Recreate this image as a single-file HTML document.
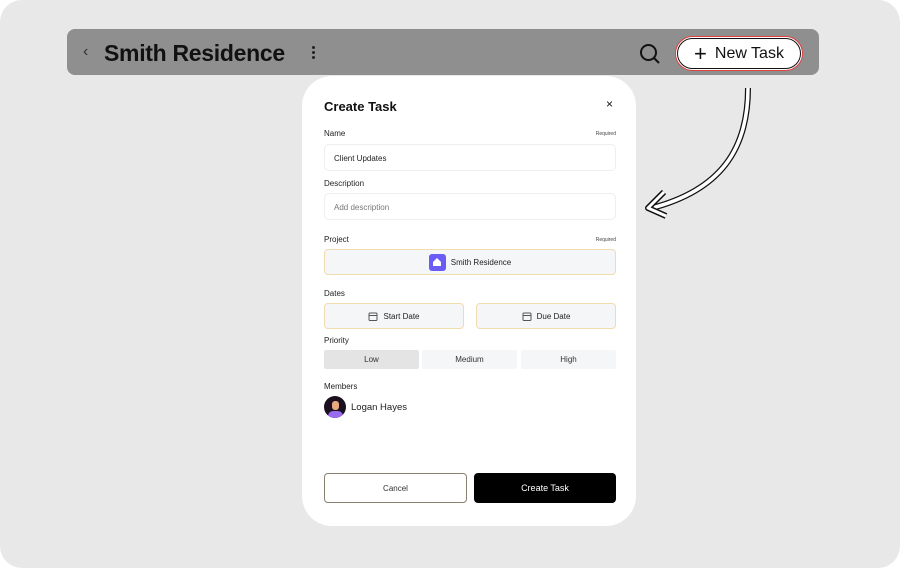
<!DOCTYPE html>
<html><head><style>
*{box-sizing:border-box;margin:0;padding:0}
html,body{width:900px;height:568px;background:#fff;overflow:hidden;font-family:"Liberation Sans",sans-serif}
.bg{position:absolute;left:0;top:0;width:900px;height:568px;background:#e8e8e8;border-radius:22px}
.bar{position:absolute;left:67px;top:29px;width:752px;height:46px;background:#8f8f8f;border-radius:8px}
.title{position:absolute;left:104px;top:40px;font-size:23px;font-weight:bold;color:#111;letter-spacing:-0.3px}
.modal{position:absolute;left:302px;top:76px;width:334px;height:450px;background:#fff;border-radius:30px}
.lbl{position:absolute;left:324px;font-size:8px;color:#222}
.req{position:absolute;right:284px;font-size:5px;color:#444}
.inp{position:absolute;left:324px;width:292px;height:27px;border:1px solid #eee;border-radius:5px;font-size:8px;color:#222;padding:9px 9px}
.btn{position:absolute;background:#f5f6f8;border:1px solid #f0dcae;border-radius:4px;font-size:8px;color:#222;display:flex;align-items:center;justify-content:center;gap:5px}
.pr{position:absolute;top:350px;height:19px;width:95px;background:#f5f6f8;font-size:8px;color:#333;display:flex;align-items:center;justify-content:center;border-radius:2px}
</style></head><body>
<div class="bg"></div>
<div class="bar"></div>
<div style="position:absolute;left:83px;top:43px;font-size:16px;color:#333">‹</div>
<div class="title">Smith Residence</div>
<div style="position:absolute;left:312px;top:46px;width:3px">
<div style="width:3px;height:3px;background:#222;border-radius:50%;margin-bottom:2px"></div><div style="width:3px;height:3px;background:#222;border-radius:50%;margin-bottom:2px"></div><div style="width:3px;height:3px;background:#222;border-radius:50%"></div></div>
<svg style="position:absolute;left:638px;top:42px" width="24" height="24"><circle cx="10.5" cy="10.5" r="7.5" fill="none" stroke="#111" stroke-width="2"/><line x1="16" y1="16" x2="21" y2="21" stroke="#111" stroke-width="2"/></svg>
<div style="position:absolute;left:675px;top:36px;width:128px;height:35px;border:1.5px solid #e04040;border-radius:18px;background:#fff;padding:1px">
<div style="width:100%;height:100%;border:1.5px solid #111;border-radius:16px;display:flex;align-items:center;justify-content:center;font-size:16px;color:#111;gap:8px"><span style="font-size:22px;font-weight:300;line-height:1">+</span>New Task</div></div>
<svg style="position:absolute;left:0;top:0" width="900" height="568">
<path d="M748 88 C748 150 720 190 652 208" fill="none" stroke="#111" stroke-width="6"/>
<path d="M748 88 C748 150 720 190 652 208" fill="none" stroke="#fff" stroke-width="3.5"/>
<path d="M664 192 L648 208 L666 216" fill="none" stroke="#111" stroke-width="6" stroke-linejoin="round"/>
<path d="M664 192 L648 208 L666 216" fill="none" stroke="#fff" stroke-width="3" stroke-linejoin="round"/>
</svg>
<div class="modal"></div>
<div style="position:absolute;left:324px;top:99px;font-size:13px;font-weight:bold;color:#111">Create Task</div>
<div style="position:absolute;left:606px;top:97px;font-size:12px;color:#111">×</div>
<div class="lbl" style="top:129px">Name</div><div class="req" style="top:131px">Required</div>
<div class="inp" style="top:144px">Client Updates</div>
<div class="lbl" style="top:179px">Description</div>
<div class="inp" style="top:193px;color:#777">Add description</div>
<div class="lbl" style="top:235px">Project</div><div class="req" style="top:237px">Required</div>
<div class="btn" style="left:324px;top:249px;width:292px;height:26px"><span style="width:17px;height:17px;background:#6b5cf5;border-radius:3px;display:flex;align-items:center;justify-content:center"><svg width="10" height="10"><path d="M5 1 L9 5 V9 H1 V5 Z" fill="#fff"/></svg></span>Smith Residence</div>
<div class="lbl" style="top:289px">Dates</div>
<div class="btn" style="left:324px;top:303px;width:140px;height:26px"><svg width="10" height="10"><rect x="1" y="2" width="8" height="7.5" rx="1" fill="none" stroke="#555" stroke-width="1"/><line x1="1" y1="4.5" x2="9" y2="4.5" stroke="#555"/></svg>Start Date</div>
<div class="btn" style="left:476px;top:303px;width:140px;height:26px"><svg width="10" height="10"><rect x="1" y="2" width="8" height="7.5" rx="1" fill="none" stroke="#555" stroke-width="1"/><line x1="1" y1="4.5" x2="9" y2="4.5" stroke="#555"/></svg>Due Date</div>
<div class="lbl" style="top:336px">Priority</div>
<div class="pr" style="left:324px;background:#e4e4e4">Low</div>
<div class="pr" style="left:422px">Medium</div>
<div class="pr" style="left:521px">High</div>
<div class="lbl" style="top:382px">Members</div>
<div style="position:absolute;left:324px;top:396px;width:22px;height:22px;border-radius:50%;background:#1a1020;overflow:hidden"><div style="position:absolute;left:4px;top:15px;width:15px;height:10px;background:#9a6af0;border-radius:6px"></div><div style="position:absolute;left:8px;top:5px;width:7px;height:9px;background:#e8a880;border-radius:3px"></div></div>
<div style="position:absolute;left:351px;top:402px;font-size:9.5px;color:#222">Logan Hayes</div>
<div style="position:absolute;left:324px;top:473px;width:143px;height:30px;border:1px solid #8a8070;border-radius:4px;display:flex;align-items:center;justify-content:center;font-size:8px;color:#333">Cancel</div>
<div style="position:absolute;left:474px;top:473px;width:142px;height:30px;background:#000;border-radius:4px;display:flex;align-items:center;justify-content:center;font-size:9px;color:#fff">Create Task</div>
</body></html>
